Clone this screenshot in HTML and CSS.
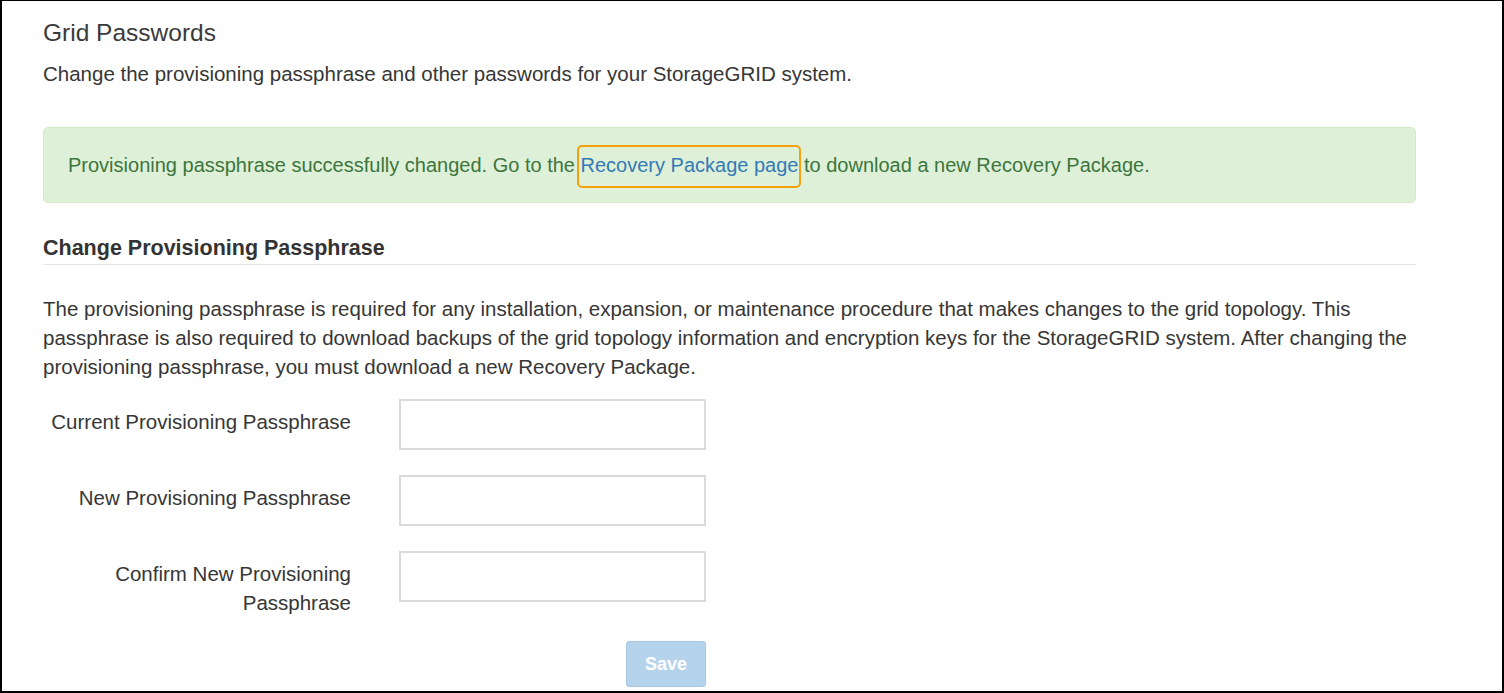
FILE: index.html
```html
<!DOCTYPE html>
<html lang="en">
<head>
<meta charset="utf-8">
<title>Grid Passwords</title>
<link rel="stylesheet" href="styles.css">
</head>
<body>
<div class="frame">
  <div class="content">
    <h1 class="title">Grid Passwords</h1>
    <p class="subtitle">Change the provisioning passphrase and other passwords for your StorageGRID system.</p>

    <div class="alert">Provisioning passphrase successfully changed. Go to the <a class="alert-link" href="#">Recovery Package page</a> to download a new Recovery Package.</div>

    <h2 class="section-title">Change Provisioning Passphrase</h2>
    <p class="section-text">The provisioning passphrase is required for any installation, expansion, or maintenance procedure that makes changes to the grid topology. This passphrase is also required to download backups of the grid topology information and encryption keys for the StorageGRID system. After changing the provisioning passphrase, you must download a new Recovery Package.</p>

    <form class="form">
      <label class="form-label" for="cur">Current Provisioning Passphrase</label>
      <input class="form-input" id="cur" type="password">
      <label class="form-label" for="new">New Provisioning Passphrase</label>
      <input class="form-input" id="new" type="password">
      <label class="form-label" for="conf">Confirm New Provisioning Passphrase</label>
      <input class="form-input" id="conf" type="password">
      <button class="btn-save" type="button" disabled>Save</button>
    </form>
  </div>
</div>
</body>
</html>
```

FILE: styles.css
```css
html, body {
  margin: 0;
  padding: 0;
  background: #fff;
}

.frame {
  box-sizing: border-box;
  width: 1504px;
  height: 693px;
  border: 2px solid #000;
  border-top-width: 1px;
  overflow: hidden;
  padding: 17px 0 0 41px;
  font-family: "Liberation Sans", Arial, sans-serif;
  color: #363636;
  font-size: 20.5px;
  line-height: 29px;
}

.content {
  width: 1373px;
}

.title {
  margin: 0;
  font-size: 24.5px;
  font-weight: normal;
  line-height: 29px;
  color: #3a3a3a;
}

.subtitle {
  margin: 12px 0 0;
}

.alert {
  margin-top: 39px;
  padding: 23px 24px 22px;
  background: #dff0d8;
  border: 1px solid #d6e9c6;
  border-radius: 5px;
  color: #3c763d;
  font-size: 20px;
}

.alert-link {
  position: relative;
  display: inline-block;
  color: #337ab7;
  text-decoration: none;
}

.alert-link::after {
  content: "";
  position: absolute;
  left: -4px;
  right: -3px;
  top: -6px;
  bottom: -8px;
  border: 2.5px solid #f2a20c;
  border-radius: 5px;
}

.section-title {
  margin: 31px 0 0;
  padding-bottom: 1px;
  border-bottom: 1px solid #e6e6e6;
  font-size: 21.5px;
  font-weight: bold;
  line-height: 29px;
  color: #333;
}

.section-text {
  margin: 29px 0 0;
}

.form {
  display: grid;
  grid-template-columns: 308px 307px;
  column-gap: 48px;
  row-gap: 25px;
  margin-top: 18px;
  align-items: start;
}

.form-label {
  padding-top: 8px;
  text-align: right;
  font-weight: normal;
}

.form-input {
  box-sizing: border-box;
  width: 307px;
  height: 51px;
  margin: 0;
  border: 2px solid #dadada;
  background: #fff;
  font: inherit;
}

.btn-save {
  grid-column: 2;
  justify-self: end;
  width: 80px;
  height: 46px;
  margin-top: -1px;
  border: 1px solid #a8c8e2;
  border-radius: 3px;
  background: #b5d3eb;
  color: #fff;
  font-family: "Liberation Sans", Arial, sans-serif;
  font-size: 18px;
  font-weight: bold;
  cursor: not-allowed;
}
```
